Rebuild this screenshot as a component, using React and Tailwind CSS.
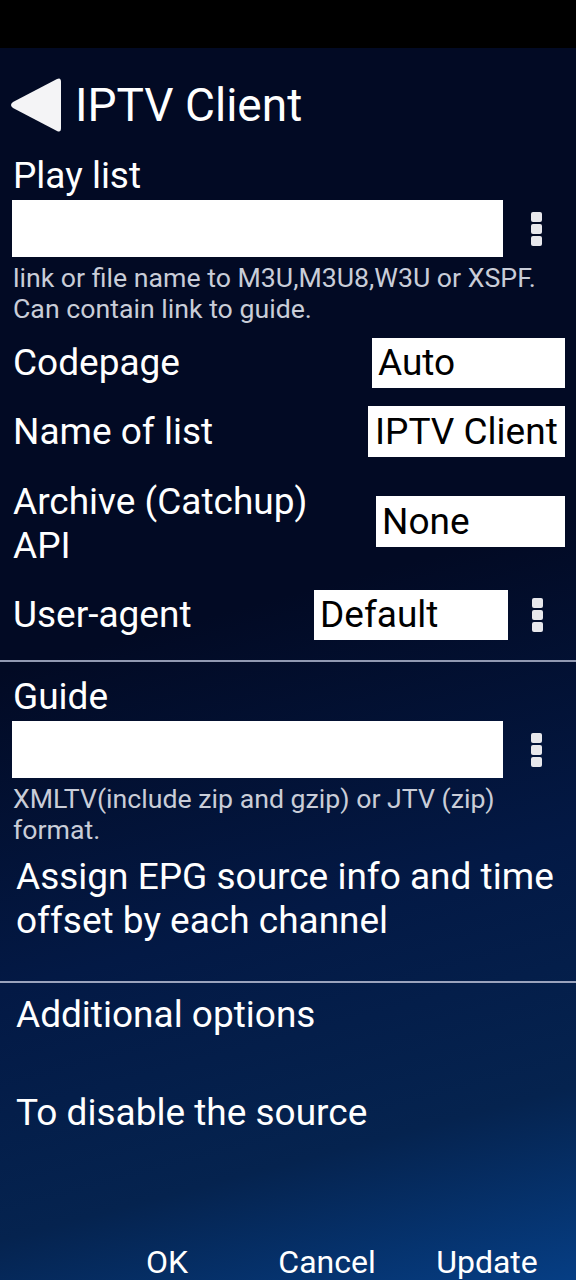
export default function App() {
  const font = { fontFamily: 'Roboto, "Noto Sans", sans-serif' };

  return (
    <div className="w-[576px] h-[1280px] overflow-hidden bg-black text-white" style={font}>
      <div className="h-12 bg-black"></div>

      <div className="h-[1232px] overflow-hidden bg-[linear-gradient(165deg,#020a24_0%,#020a24_45%,#031945_68%,#05234f_86%,#063e84_100%)]">
        {/* header */}
        <div className="h-[106px] flex items-center pl-[9px] pt-[8px]">
          <svg width="52" height="58" viewBox="0 0 52 58">
            <path d="M48 3 Q52 1 52 6 L52 52 Q52 57 48 55 L4 32 Q0 29 4 26 Z" fill="#f4f4f6" />
          </svg>
          <span className="ml-[14px] text-[46px] leading-[54px] text-white">IPTV Client</span>
        </div>

        {/* playlist */}
        <div className="pl-[13px] text-[37px] leading-[44px]">Play list</div>
        <div className="mt-[2px] flex items-center">
          <div className="ml-[12px] w-[491px] h-[57px] bg-white"></div>
          <Dots className="ml-[28px]" />
        </div>
        <div className="mt-[6px] pl-[13px] text-[26.7px] leading-[31px] text-[#c9cdd8]">
          link or file name to M3U,M3U8,W3U or XSPF.
          <br />
          Can contain link to guide.
        </div>

        {/* options */}
        <div className="mt-[13px] h-[50px] flex items-center justify-between">
          <span className="pl-[13px] text-[37px] leading-[44px]">Codepage</span>
          <Box className="w-[193px] h-[50px] mr-[11px]">Auto</Box>
        </div>
        <div className="mt-[18px] h-[51px] flex items-center justify-between">
          <span className="pl-[13px] text-[37px] leading-[44px]">Name of list</span>
          <Box className="w-[197px] h-[51px] mr-[11px] pl-[7px]">IPTV Client</Box>
        </div>
        <div className="mt-[23px] flex items-start justify-between">
          <span className="pl-[13px] text-[37px] leading-[44px]">
            Archive (Catchup)
            <br />
            API
          </span>
          <Box className="mt-[16px] w-[189px] h-[51px] mr-[11px]">None</Box>
        </div>
        <div className="mt-[22px] h-[50px] flex items-center">
          <span className="pl-[13px] text-[37px] leading-[44px]">User-agent</span>
          <Box className="ml-auto w-[194px] h-[50px]">Default</Box>
          <Dots className="ml-[24px] mr-[33px]" />
        </div>

        <div className="mt-[20px] h-[2px] bg-[#9199b2]"></div>

        {/* guide */}
        <div className="mt-[13px] pl-[13px] text-[37px] leading-[44px]">Guide</div>
        <div className="mt-[2px] flex items-center">
          <div className="ml-[12px] w-[491px] h-[57px] bg-white"></div>
          <Dots className="ml-[28px]" />
        </div>
        <div className="mt-[6px] pl-[13px] text-[26.7px] leading-[31px] text-[#c9cdd8]">
          XMLTV(include zip and gzip) or JTV (zip)
          <br />
          format.
        </div>
        <div className="mt-[9px] pl-[16px] text-[37px] leading-[44px]">
          Assign EPG source info and time
          <br />
          offset by each channel
        </div>

        <div className="mt-[38px] h-[2px] bg-[#9aa3bd]"></div>

        <div className="mt-[10px] pl-[16px] text-[37px] leading-[44px]">Additional options</div>
        <div className="mt-[54px] pl-[16px] text-[37px] leading-[44px]">To disable the source</div>

        {/* buttons */}
        <div className="mt-[107px] flex justify-end pr-[9px] text-[32px] leading-[40px]">
          <div className="w-[160px] text-center">OK</div>
          <div className="w-[160px] text-center">Cancel</div>
          <div className="w-[160px] text-center">Update</div>
        </div>
      </div>
    </div>
  );
}

function Box({ children, className = '' }) {
  return (
    <div className={`bg-white text-black text-[37px] leading-[44px] pl-[6px] flex items-center whitespace-nowrap overflow-hidden ${className}`}>
      {children}
    </div>
  );
}

function Dots({ className = '' }) {
  return (
    <div className={`flex flex-col gap-[2px] ${className}`}>
      <span className="w-[11px] h-[10px] rounded-[2px] bg-[#e8e8ec]"></span>
      <span className="w-[11px] h-[10px] rounded-[2px] bg-[#e8e8ec]"></span>
      <span className="w-[11px] h-[10px] rounded-[2px] bg-[#e8e8ec]"></span>
    </div>
  );
}
